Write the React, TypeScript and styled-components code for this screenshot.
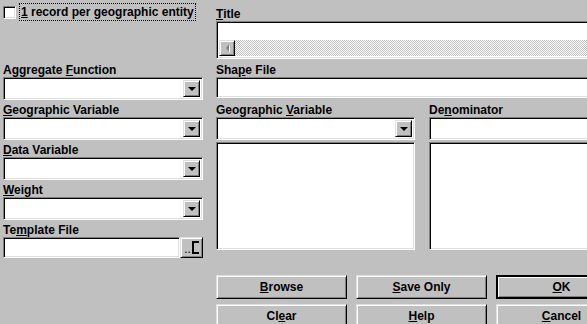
import styled, { createGlobalStyle } from "styled-components";

const GlobalStyle = createGlobalStyle`
  html, body { margin: 0; background: #c0c0c0; overflow: hidden; }
  body { font: bold 12px "Liberation Sans", Arial, sans-serif; color: #000; }
`;

const Dialog = styled.div`
  display: flex;
  align-items: flex-start;
  gap: 13px;
  padding-left: 3px;
  width: 640px;
`;

const LeftColumn = styled.div`
  width: 200px;
  flex: none;
  display: flex;
  flex-direction: column;
`;

const RightColumn = styled.div`
  width: 412px;
  flex: none;
  display: flex;
  flex-direction: column;
  padding-top: 7px;

  & > * {
    flex-shrink: 0;
  }
`;

const CheckRow = styled.label`
  margin-top: 3px;
  height: 18px;
  display: flex;
  align-items: center;
  gap: 3px;
`;

const CheckBox = styled.span`
  width: 13px;
  height: 13px;
  box-sizing: border-box;
  background: #fff;
  border: 1px solid;
  border-color: #808080 #fff #fff #808080;
  box-shadow: inset 1px 1px #000, inset -1px -1px #dfdfdf;
`;

const FocusText = styled.span`
  border: 1px dotted #000;
  padding: 1px;
  line-height: 14px;
`;

const FieldStack = styled.div<{ $top: number }>`
  margin-top: ${(p) => p.$top}px;
  display: flex;
  flex-direction: column;
  gap: 3px;
`;

const Label = styled.div`
  line-height: 14px;
  height: 14px;
  white-space: nowrap;
`;

const Sunken = styled.div<{ $h: number; $gap?: number }>`
  height: ${(p) => p.$h}px;
  margin-top: ${(p) => p.$gap ?? 0}px;
  flex-shrink: 0;
  box-sizing: border-box;
  background: #fff;
  border: 1px solid;
  border-color: #808080 #fff #fff #808080;
  box-shadow: inset 1px 1px #000, inset -1px -1px #dfdfdf;
`;

const FileInput = styled(Sunken)`
  flex: 1;
`;

const ComboBox = styled(Sunken)`
  display: flex;
  justify-content: flex-end;
  align-items: center;
  padding: 2px;
`;

const Raised = styled.div`
  box-sizing: border-box;
  background: #c0c0c0;
  border: 1px solid;
  border-color: #dfdfdf #000 #000 #dfdfdf;
  box-shadow: inset 1px 1px #fff, inset -1px -1px #808080;
  display: flex;
  align-items: center;
  justify-content: center;
`;

const ArrowButton = styled(Raised)`
  width: 17px;
  height: 17px;
  flex: none;
`;

const DownTriangle = styled.span`
  width: 0;
  height: 0;
  border-left: 4px solid transparent;
  border-right: 4px solid transparent;
  border-top: 4px solid #000;
  margin-top: 1px;
`;

const FileRow = styled.div`
  display: flex;
  height: 21px;
`;

const BrowseButton = styled(Raised)`
  width: 23px;
  height: 21px;
  flex: none;
  gap: 1px;
  font-weight: normal;
  padding-top: 2px;
`;

const Bracket = styled.span`
  width: 5px;
  height: 9px;
  border: 2px solid #000;
  border-right: none;
  margin-bottom: 2px;
`;

const TitleBox = styled(Sunken)`
  display: flex;
  flex-direction: column;
  padding: 2px 0 2px 2px;
`;

const TitleText = styled.div`
  flex: 1;
`;

const HScroll = styled.div`
  height: 16px;
  flex: none;
  display: flex;
  background: repeating-conic-gradient(#c0c0c0 0 25%, #fff 0 50%) 0 0 / 2px 2px;
`;

const ScrollArrow = styled(Raised)`
  width: 16px;
  height: 16px;
`;

const LeftTriangle = styled.span`
  width: 0;
  height: 0;
  border-top: 4px solid transparent;
  border-bottom: 4px solid transparent;
  border-right: 3px solid #808080;
  filter: drop-shadow(1px 1px 0 #fff);
`;

const Pair = styled.div`
  display: grid;
  grid-template-columns: 199px 199px;
  column-gap: 14px;
  margin-top: 5px;
`;

const Column = styled.div`
  display: flex;
  flex-direction: column;
`;

const ButtonGrid = styled.div`
  margin-top: 25px;
  display: grid;
  grid-template-columns: repeat(3, 131px);
  column-gap: 9px;
  row-gap: 5px;
`;

const PushButton = styled(Raised)<{ $default?: boolean }>`
  height: 24px;
  ${(p) =>
    p.$default &&
    `
    border: 2px solid #000;
    box-shadow: inset 1px 1px #fff, inset -1px -1px #808080;
  `}
`;

function Combo() {
  return (
    <ComboBox $h={23}>
      <ArrowButton>
        <DownTriangle />
      </ArrowButton>
    </ComboBox>
  );
}

export default function App() {
  return (
    <>
      <GlobalStyle />
      <Dialog>
        <LeftColumn>
          <CheckRow>
            <CheckBox />
            <FocusText>
              <u>1</u> record per geographic entity
            </FocusText>
          </CheckRow>
          <FieldStack $top={42}>
            <div>
              <Label>
                Aggregate <u>F</u>unction
              </Label>
              <Combo />
            </div>
            <div>
              <Label>
                <u>G</u>eographic Variable
              </Label>
              <Combo />
            </div>
            <div>
              <Label>
                <u>D</u>ata Variable
              </Label>
              <Combo />
            </div>
            <div>
              <Label>
                <u>W</u>eight
              </Label>
              <Combo />
            </div>
            <div>
              <Label>
                Te<u>m</u>plate File
              </Label>
              <FileRow>
                <FileInput $h={21} />
                <BrowseButton>
                  ..<Bracket />
                </BrowseButton>
              </FileRow>
            </div>
          </FieldStack>
        </LeftColumn>

        <RightColumn>
          <Label>
            <u>T</u>itle
          </Label>
          <TitleBox $h={38}>
            <TitleText />
            <HScroll>
              <ScrollArrow>
                <LeftTriangle />
              </ScrollArrow>
            </HScroll>
          </TitleBox>
          <FieldStack $top={4}>
            <div>
              <Label>
                Sha<u>p</u>e File
              </Label>
              <Sunken $h={21} />
            </div>
          </FieldStack>
          <Pair>
            <Column>
              <Label>
                Geographic <u>V</u>ariable
              </Label>
              <Combo />
              <Sunken $h={108} $gap={2} />
            </Column>
            <Column>
              <Label>
                De<u>n</u>ominator
              </Label>
              <Sunken $h={23} />
              <Sunken $h={108} $gap={2} />
            </Column>
          </Pair>
          <ButtonGrid>
            <PushButton>
              <span>
                <u>B</u>rowse
              </span>
            </PushButton>
            <PushButton>
              <span>
                <u>S</u>ave Only
              </span>
            </PushButton>
            <PushButton $default>
              <span>
                <u>O</u>K
              </span>
            </PushButton>
            <PushButton>
              <span>
                Cl<u>e</u>ar
              </span>
            </PushButton>
            <PushButton>
              <span>
                <u>H</u>elp
              </span>
            </PushButton>
            <PushButton>
              <span>
                <u>C</u>ancel
              </span>
            </PushButton>
          </ButtonGrid>
        </RightColumn>
      </Dialog>
    </>
  );
}
